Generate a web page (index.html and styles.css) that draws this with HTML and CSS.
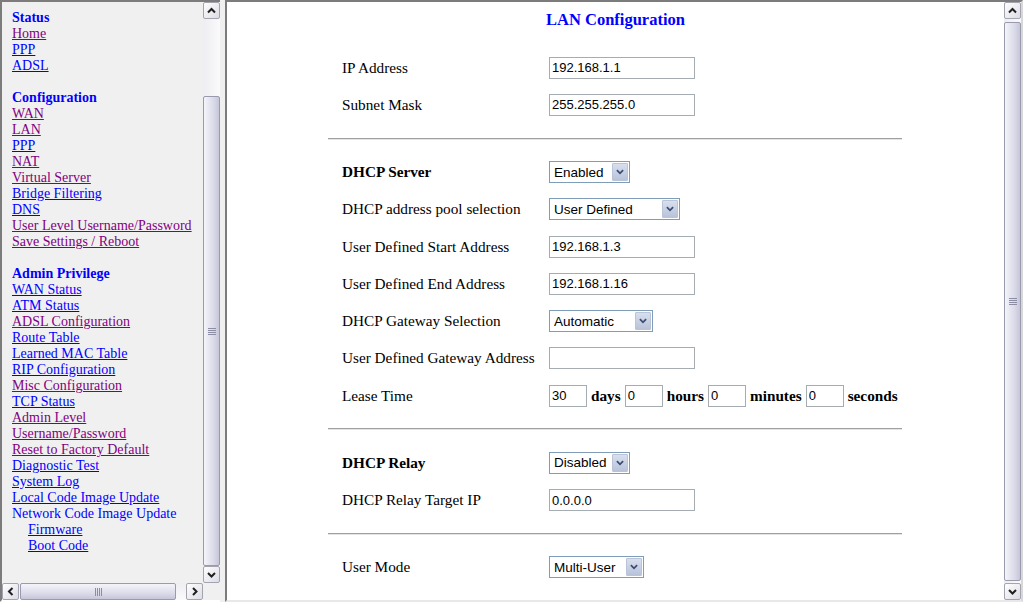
FILE: index.html
```html
<!DOCTYPE html>
<html>
<head>
<meta charset="utf-8">
<title>LAN Configuration</title>
<link rel="stylesheet" href="styles.css">
</head>
<body>
<div class="frame-left">
  <div class="left-body">
    <nav class="menu">
      <div class="group">
        <div class="head">Status</div>
        <div><a class="v" href="#">Home</a></div>
        <div><a href="#">PPP</a></div>
        <div><a href="#">ADSL</a></div>
      </div>
      <div class="group">
        <div class="head">Configuration</div>
        <div><a class="v" href="#">WAN</a></div>
        <div><a class="v" href="#">LAN</a></div>
        <div><a href="#">PPP</a></div>
        <div><a class="v" href="#">NAT</a></div>
        <div><a class="v" href="#">Virtual Server</a></div>
        <div><a href="#">Bridge Filtering</a></div>
        <div><a href="#">DNS</a></div>
        <div><a class="v" href="#">User Level Username/Password</a></div>
        <div><a class="v" href="#">Save Settings / Reboot</a></div>
      </div>
      <div class="group">
        <div class="head">Admin Privilege</div>
        <div><a href="#">WAN Status</a></div>
        <div><a href="#">ATM Status</a></div>
        <div><a class="v" href="#">ADSL Configuration</a></div>
        <div><a href="#">Route Table</a></div>
        <div><a href="#">Learned MAC Table</a></div>
        <div><a href="#">RIP Configuration</a></div>
        <div><a class="v" href="#">Misc Configuration</a></div>
        <div><a href="#">TCP Status</a></div>
        <div><a class="v" href="#">Admin Level</a></div>
        <div><a class="v" href="#">Username/Password</a></div>
        <div><a class="v" href="#">Reset to Factory Default</a></div>
        <div><a href="#">Diagnostic Test</a></div>
        <div><a href="#">System Log</a></div>
        <div><a href="#">Local Code Image Update</a></div>
        <div class="plain">Network Code Image Update</div>
        <div class="sub"><a href="#">Firmware</a></div>
        <div class="sub"><a href="#">Boot Code</a></div>
      </div>
    </nav>
    <div class="vscroll">
      <div class="sb-btn"><svg viewBox="0 0 15 15"><polyline points="4,9.5 7.5,6 11,9.5"/></svg></div>
      <div class="sb-track">
        <div class="sb-thumb thumb-left"><svg class="grip" viewBox="0 0 8 7"><path d="M0 0.5H8M0 2.5H8M0 4.5H8M0 6.5H8"/></svg></div>
      </div>
      <div class="sb-btn"><svg viewBox="0 0 15 15"><polyline points="4,6 7.5,9.5 11,6"/></svg></div>
    </div>
  </div>
  <div class="hbar">
    <div class="hscroll">
      <div class="sb-btn"><svg viewBox="0 0 15 15"><polyline points="9.5,4 6,7.5 9.5,11"/></svg></div>
      <div class="sb-htrack">
        <div class="sb-hthumb"><svg class="grip" viewBox="0 0 7 8"><path d="M0.5 0V8M2.5 0V8M4.5 0V8M6.5 0V8"/></svg></div>
      </div>
      <div class="sb-btn"><svg viewBox="0 0 15 15"><polyline points="6,4 9.5,7.5 6,11"/></svg></div>
    </div>
    <div class="corner"></div>
  </div>
</div>
<div class="divider"></div>
<div class="frame-right">
  <main class="content">
    <h1 class="title">LAN Configuration</h1>
    <table class="form">
      <tr class="row"><td class="label">IP Address</td><td><input class="txt" type="text" value="192.168.1.1"></td></tr>
      <tr class="row"><td class="label">Subnet Mask</td><td><input class="txt" type="text" value="255.255.255.0"></td></tr>
      <tr class="sep"><td colspan="2"><hr></td></tr>
      <tr class="row"><td class="label bold">DHCP Server</td><td><span class="sel w-enabled"><select><option>Enabled</option></select><span class="sel-btn"><svg viewBox="0 0 9 6"><polyline points="1,1 4.5,4.5 8,1"/></svg></span></span></td></tr>
      <tr class="row"><td class="label">DHCP address pool selection</td><td><span class="sel w-userdef"><select><option>User Defined</option></select><span class="sel-btn"><svg viewBox="0 0 9 6"><polyline points="1,1 4.5,4.5 8,1"/></svg></span></span></td></tr>
      <tr class="row"><td class="label">User Defined Start Address</td><td><input class="txt" type="text" value="192.168.1.3"></td></tr>
      <tr class="row"><td class="label">User Defined End Address</td><td><input class="txt" type="text" value="192.168.1.16"></td></tr>
      <tr class="row"><td class="label">DHCP Gateway Selection</td><td><span class="sel w-auto"><select><option>Automatic</option></select><span class="sel-btn"><svg viewBox="0 0 9 6"><polyline points="1,1 4.5,4.5 8,1"/></svg></span></span></td></tr>
      <tr class="row"><td class="label">User Defined Gateway Address</td><td><input class="txt" type="text" value=""></td></tr>
      <tr class="row"><td class="label">Lease Time</td><td>
        <div class="lease">
          <input class="txt txt-sm" type="text" value="30"><b>days</b>
          <input class="txt txt-sm" type="text" value="0"><b>hours</b>
          <input class="txt txt-sm" type="text" value="0"><b>minutes</b>
          <input class="txt txt-sm" type="text" value="0"><b>seconds</b>
        </div>
      </td></tr>
      <tr class="sep"><td colspan="2"><hr></td></tr>
      <tr class="row"><td class="label bold">DHCP Relay</td><td><span class="sel w-enabled"><select><option>Disabled</option></select><span class="sel-btn"><svg viewBox="0 0 9 6"><polyline points="1,1 4.5,4.5 8,1"/></svg></span></span></td></tr>
      <tr class="row"><td class="label">DHCP Relay Target IP</td><td><input class="txt" type="text" value="0.0.0.0"></td></tr>
      <tr class="sep"><td colspan="2"><hr></td></tr>
      <tr class="row"><td class="label">User Mode</td><td><span class="sel w-multi"><select><option>Multi-User</option></select><span class="sel-btn"><svg viewBox="0 0 9 6"><polyline points="1,1 4.5,4.5 8,1"/></svg></span></span></td></tr>
    </table>
  </main>
  <div class="vscroll">
    <div class="sb-btn"><svg viewBox="0 0 15 15"><polyline points="4,9.5 7.5,6 11,9.5"/></svg></div>
    <div class="sb-track">
      <div class="sb-thumb thumb-right"><svg class="grip" viewBox="0 0 8 7"><path d="M0 0.5H8M0 2.5H8M0 4.5H8M0 6.5H8"/></svg></div>
    </div>
    <div class="sb-btn"><svg viewBox="0 0 15 15"><polyline points="4,6 7.5,9.5 11,6"/></svg></div>
  </div>
</div>
</body>
</html>
```
FILE: styles.css
```css
html, body {
  margin: 0;
  padding: 0;
}
body {
  width: 1023px;
  height: 602px;
  display: flex;
  overflow: hidden;
  background: #f0f0f0;
  font-family: "Liberation Serif", "Times New Roman", serif;
}

/* ---------- left frame ---------- */
.frame-left {
  width: 220px;
  height: 602px;
  box-sizing: border-box;
  display: flex;
  flex-direction: column;
  border-top: 2px solid #7c7c7c;
  border-left: 2px solid #7c7c7c;
  border-bottom: 2px solid #ffffff;
  background: #f0f0f0;
}
.left-body {
  flex: 1;
  display: flex;
  min-height: 0;
}
.menu {
  flex: 1;
  overflow: hidden;
  padding: 8px 0 0 10px;
  font-size: 14px;
  line-height: 16px;
  white-space: nowrap;
  color: #0000ff;
}
.group + .group {
  margin-top: 16px;
}
.head {
  font-weight: bold;
  color: #0000ff;
}
.menu a {
  color: #0000ff;
  text-decoration: underline;
}
.menu a.v {
  color: #800080;
}
.plain {
  color: #0000ff;
}
.sub {
  padding-left: 16px;
}

.divider {
  width: 5px;
  background: #f0f0f0;
}

/* ---------- right frame ---------- */
.frame-right {
  flex: 1;
  height: 602px;
  box-sizing: border-box;
  display: flex;
  border-top: 2px solid #7c7c7c;
  border-left: 2px solid #7c7c7c;
  border-right: 2px solid #d8d8d8;
  border-bottom: 2px solid #e8e8e8;
  background: #ffffff;
}
.content {
  flex: 1;
  overflow: hidden;
  background: #ffffff;
}
.title {
  margin: 0 0 20px;
  padding-top: 8px;
  font-size: 16.5px;
  line-height: 19px;
  color: #0000ff;
  text-align: center;
  font-weight: bold;
}
.form {
  width: 574px;
  margin: 0 auto 0 101px;
  border-collapse: collapse;
  font-size: 15.25px;
  color: #000;
}
.form td {
  padding: 0;
  vertical-align: middle;
}
.row {
  height: 37.25px;
}
.label {
  width: 207px;
  padding-left: 14px !important;
  white-space: nowrap;
}
.bold {
  font-weight: bold;
}
.sep td {
  height: 30px;
}
.sep hr {
  margin: 0;
  height: 0;
  border: 0;
  border-top: 1px solid #a0a0a0;
  border-bottom: 1px solid #e4e4e4;
}

.txt {
  width: 146px;
  height: 22px;
  box-sizing: border-box;
  margin: 0;
  padding: 0 2px;
  border: 1px solid #a5acb2;
  font: 13px "Liberation Sans", Arial, sans-serif;
  color: #000;
  background: #fff;
  vertical-align: middle;
}
.txt-sm {
  width: 38px;
}
.lease {
  display: flex;
  align-items: center;
  gap: 4px;
  white-space: nowrap;
}
.lease b {
  font-weight: bold;
}

.sel {
  display: inline-flex;
  height: 22px;
  box-sizing: border-box;
  border: 1px solid #7f9db9;
  background: #fff;
  vertical-align: middle;
}
.sel select {
  appearance: none;
  -webkit-appearance: none;
  border: 0;
  margin: 0;
  padding: 0 0 0 4px;
  background: transparent;
  font: 13.5px "Liberation Sans", Arial, sans-serif;
  color: #000;
  outline: none;
}
.w-enabled select { width: 61px; }
.w-userdef select { width: 111px; }
.w-auto select { width: 84px; }
.w-multi select { width: 75px; }
.sel-btn {
  width: 16px;
  margin: 1px;
  box-sizing: border-box;
  border: 1px solid #b9c4d8;
  border-radius: 1px;
  background: linear-gradient(#d8dfee, #b8c3da);
  display: flex;
  align-items: center;
  justify-content: center;
}
.sel-btn svg {
  width: 8px;
  height: 6px;
  fill: none;
  stroke: #3c4c70;
  stroke-width: 2;
}

/* ---------- scrollbars ---------- */
.vscroll {
  width: 17px;
  display: flex;
  flex-direction: column;
  background: linear-gradient(to right, #eeeef2, #fafafc);
}
.sb-btn {
  width: 17px;
  height: 17px;
  box-sizing: border-box;
  border: 1px solid #a4a4b0;
  border-radius: 2px;
  background: linear-gradient(135deg, #ffffff, #dcdce6);
  display: flex;
  align-items: center;
  justify-content: center;
  flex: none;
}
.sb-btn svg {
  width: 15px;
  height: 15px;
  fill: none;
  stroke: #202020;
  stroke-width: 2;
}
.sb-track {
  flex: 1;
  display: flex;
  flex-direction: column;
}
.sb-thumb {
  box-sizing: border-box;
  border: 1px solid #9a9aae;
  border-radius: 2px;
  background: linear-gradient(to right, #f4f4fa, #dcdcea 60%, #c6c6da);
  display: flex;
  align-items: center;
  justify-content: center;
}
.thumb-left {
  margin-top: 77px;
  flex: 1;
}
.thumb-right {
  margin: 3px 0 2px;
  flex: 1;
}
.grip {
  width: 8px;
  height: 7px;
  fill: none;
  stroke: #8c8ca2;
  stroke-width: 1;
}

.hbar {
  height: 17px;
  display: flex;
}
.hscroll {
  flex: 1;
  display: flex;
  background: linear-gradient(#eeeef2, #fafafc);
}
.sb-htrack {
  flex: 1;
  display: flex;
}
.sb-hthumb {
  width: 156px;
  margin-left: 1px;
  box-sizing: border-box;
  border: 1px solid #9a9aae;
  border-radius: 2px;
  background: linear-gradient(#f4f4fa, #dcdcea 60%, #c6c6da);
  display: flex;
  align-items: center;
  justify-content: center;
}
.sb-hthumb .grip {
  width: 7px;
  height: 8px;
}
.corner {
  width: 17px;
  background: #f0f0f0;
}
```
